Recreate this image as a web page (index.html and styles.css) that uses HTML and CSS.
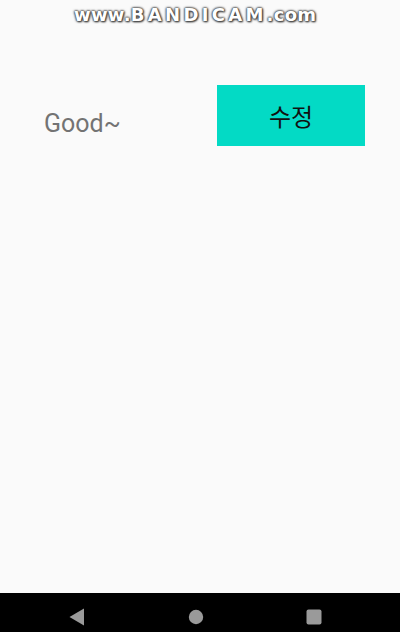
FILE: index.html
```html
<!DOCTYPE html>
<html lang="ko">
<head>
<meta charset="utf-8">
<title>Good~</title>
<link rel="stylesheet" href="styles.css">
</head>
<body>
<div class="screen">
  <main class="content">
    <span class="label">Good~</span>
    <button class="edit-btn" type="button">수정</button>
  </main>
  <nav class="navbar">
    <svg class="nav-icon" width="20" height="20" viewBox="0 0 20 20"><path d="M16 1.5 L16 18.5 L1.5 10 Z" fill="#9a9a9a"/></svg>
    <svg class="nav-icon" width="20" height="20" viewBox="0 0 20 20"><circle cx="10" cy="10" r="7.2" fill="#9a9a9a"/></svg>
    <svg class="nav-icon" width="20" height="20" viewBox="0 0 20 20"><rect x="2.5" y="2.5" width="15" height="15" rx="2" fill="#9a9a9a"/></svg>
  </nav>
  <div class="watermark"><span class="wm-small">www.</span><span class="wm-big">BANDICAM</span><span class="wm-small">.com</span></div>
</div>
</body>
</html>
```

FILE: styles.css
```css
html, body {
  margin: 0;
  padding: 0;
  background: #fafafa;
}

.screen {
  position: relative;
  width: 400px;
  height: 632px;
  display: flex;
  flex-direction: column;
  overflow: hidden;
}

.content {
  flex: 1;
  display: flex;
  justify-content: space-between;
  align-items: flex-start;
  padding: 85px 35px 0 44px;
  background: #fafafa;
}

.label {
  margin-top: 25px;
  font-family: Roboto, "Noto Sans", sans-serif;
  font-size: 25px;
  line-height: 28px;
  color: #737373;
}

.edit-btn {
  width: 148px;
  height: 61px;
  border: none;
  border-radius: 0;
  margin: 0;
  padding: 0;
  background: #03dac5;
  color: #111;
  font-family: "Noto Sans CJK KR", Roboto, sans-serif;
  font-size: 24px;
  line-height: 28px;
}

.navbar {
  height: 39px;
  background: #000;
  display: flex;
  align-items: center;
  padding: 0 0 0 68px;
  gap: 98px;
}

.nav-icon {
  display: block;
  margin-top: 8px;
}

.watermark {
  position: absolute;
  top: 3px;
  left: 74px;
  font-family: "DejaVu Sans", sans-serif;
  font-weight: bold;
  font-size: 18px;
  line-height: 24px;
  color: #fff;
  text-shadow: 0 0 2px #444, 0 0 2px #444, 0 0 3px #555, 1px 1px 2px #333;
  white-space: nowrap;
}

.wm-small {
  letter-spacing: 0.3px;
}

.wm-big {
  letter-spacing: 3.3px;
}
```
